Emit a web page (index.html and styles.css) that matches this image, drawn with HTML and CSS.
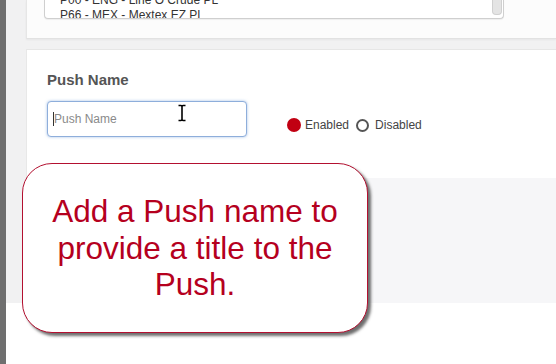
FILE: index.html
```html
<!DOCTYPE html>
<html>
<head>
<meta charset="utf-8">
<link rel="stylesheet" href="styles.css">
</head>
<body>
<div class="page">
  <div class="rail"></div>
  <div class="main">
    <div class="graybg">
      <div class="panel panel-top">
        <div class="listbox">
          <div class="list-items">
            <div class="item">P00 - ENG - Line O Crude PL</div>
            <div class="item">P66 - MEX - Mextex EZ PL</div>
          </div>
          <div class="scroll-thumb"></div>
        </div>
      </div>
      <div class="panel panel-form">
        <div class="label">Push Name</div>
        <div class="row">
          <div class="input"><span class="caret"></span><span class="placeholder">Push Name</span></div>
          <div class="radios">
            <span class="radio on"></span><span class="rlabel">Enabled</span>
            <span class="radio off"></span><span class="rlabel">Disabled</span>
          </div>
        </div>
        <svg class="ibeam" width="10" height="18" viewBox="0 0 10 18">
          <path d="M1.5 1.5 H4 M6 1.5 H8.5 M4 1.5 Q5 1.5 5 3 V15 Q5 16.5 4 16.5 M6 1.5 Q5 1.5 5 3 M5 15 Q5 16.5 6 16.5 M1.5 16.5 H4 M6 16.5 H8.5" fill="none" stroke="#000" stroke-width="1.6"/>
        </svg>
      </div>
      <div class="panel panel-low"></div>
    </div>
  </div>
</div>
<div class="callout">
  <p>Add a Push name to provide a title to the Push.</p>
</div>
</body>
</html>
```

FILE: styles.css
```css
html, body {
  margin: 0;
  padding: 0;
  background: #ffffff;
  font-family: "Liberation Sans", Arial, sans-serif;
  width: 556px;
  height: 364px;
  overflow: hidden;
}
.page {
  display: flex;
  height: 364px;
}
.rail {
  width: 6px;
  background: #6f6f6f;
  flex: none;
}
.main {
  flex: 1;
  background: #ffffff;
}
.graybg {
  background: #f1f1f2;
  height: 303px;
  padding-left: 20px;
  display: flex;
  flex-direction: column;
}
.panel {
  background: #fcfcfc;
}
.panel-top {
  height: 38px;
  border-bottom: 1px solid #e2e2e2;
  border-left: 1px solid #e6e6e6;
  box-sizing: content-box;
  padding-left: 17px;
  box-shadow: 0 1px 2px rgba(0,0,0,0.05);
}
.listbox {
  width: 458px;
  height: 18px;
  border: 1px solid #cfcfcf;
  border-top: none;
  border-radius: 0 0 4px 4px;
  background: #ffffff;
  overflow: hidden;
  display: flex;
  box-shadow: 0 1px 1px rgba(0,0,0,0.06);
}
.list-items {
  flex: 1;
  margin-top: -7px;
  padding-left: 15px;
  font-size: 12px;
  line-height: 15px;
  color: #333;
}
.scroll-thumb {
  width: 8px;
  height: 14px;
  background: #e4e4e4;
  border: 1px solid #d0d0d0;
  border-top: none;
  border-radius: 0 0 4px 4px;
  margin-right: 1px;
}
.panel-form {
  margin-top: 10px;
  height: 129px;
  border-top: 1px solid #e6e6e6;
  border-left: 1px solid #e8e8e8;
  background: #ffffff;
  padding: 21px 0 0 20px;
  box-sizing: border-box;
  position: relative;
}
.label {
  font-size: 15px;
  font-weight: bold;
  color: #555555;
  line-height: 18px;
}
.row {
  display: flex;
  margin-top: 12px;
  gap: 40px;
}
.input {
  width: 200px;
  height: 36px;
  box-sizing: border-box;
  border: 1px solid #8eaedb;
  border-radius: 4px;
  box-shadow: 0 0 3px rgba(90,140,210,0.55);
  background: #fff;
  display: flex;
  align-items: center;
  padding-left: 5px;
}
.caret {
  width: 1px;
  height: 14px;
  background: #333;
}
.placeholder {
  font-size: 12px;
  color: #8a8a8a;
}
.radios {
  display: flex;
  align-items: center;
  margin-top: 17px;
  height: 14px;
  font-size: 12px;
  color: #444;
}
.radio {
  display: inline-block;
  box-sizing: border-box;
  border-radius: 50%;
}
.radio.on {
  width: 14px;
  height: 14px;
  background: #c10012;
  margin-right: 4px;
}
.radio.off {
  width: 13px;
  height: 13px;
  border: 2px solid #555;
  margin-left: 7px;
  margin-right: 6px;
}
.ibeam {
  position: absolute;
  left: 150px;
  top: 54px;
}
.panel-low {
  flex: 1;
  background: #f6f6f8;
  border-left: 1px solid #ececee;
}
.callout {
  position: absolute;
  left: 22px;
  top: 163px;
  width: 346px;
  height: 170px;
  box-sizing: border-box;
  border: 1.5px solid #b31030;
  border-radius: 30px;
  background: #ffffff;
  box-shadow: 3px 3px 3px rgba(60,60,60,0.75);
  display: flex;
  align-items: center;
  justify-content: center;
}
.callout p {
  margin: 0;
  padding: 0 20px;
  text-align: center;
  font-size: 31.5px;
  line-height: 36.5px;
  color: #b5001e;
}
```
